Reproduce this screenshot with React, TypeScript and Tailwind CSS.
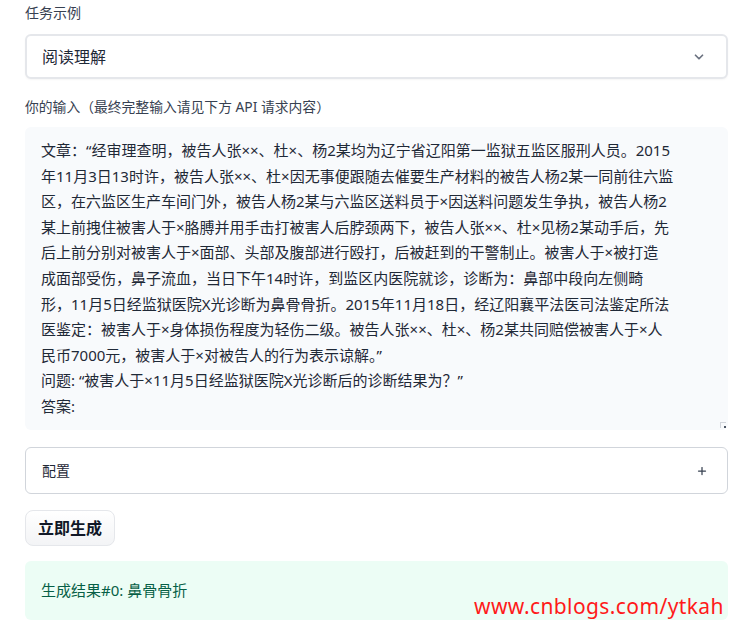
import { ChevronDown, Plus } from 'lucide-react'

const lines = [
  '文章：“经审理查明，被告人张××、杜×、杨2某均为辽宁省辽阳第一监狱五监区服刑人员。2015',
  '年11月3日13时许，被告人张××、杜×因无事便跟随去催要生产材料的被告人杨2某一同前往六监',
  '区，在六监区生产车间门外，被告人杨2某与六监区送料员于×因送料问题发生争执，被告人杨2',
  '某上前拽住被害人于×胳膊并用手击打被害人后脖颈两下，被告人张××、杜×见杨2某动手后，先',
  '后上前分别对被害人于×面部、头部及腹部进行殴打，后被赶到的干警制止。被害人于×被打造',
  '成面部受伤，鼻子流血，当日下午14时许，到监区内医院就诊，诊断为：鼻部中段向左侧畸',
  '形，11月5日经监狱医院X光诊断为鼻骨骨折。2015年11月18日，经辽阳襄平法医司法鉴定所法',
  '医鉴定：被害人于×身体损伤程度为轻伤二级。被告人张××、杜×、杨2某共同赔偿被害人于×人',
  '民币7000元，被害人于×对被告人的行为表示谅解。”',
  '问题: “被害人于×11月5日经监狱医院X光诊断后的诊断结果为？”',
  '答案:',
]

const font = { fontFamily: '"Noto Sans", "Noto Sans CJK SC", sans-serif' }

export default function App() {
  return (
    <main className="relative min-h-screen bg-white text-[#1f2937]" style={font}>
      <div className="pl-[25px] pr-[18px] pt-[3px] w-full">
        {/* 任务示例 */}
        <div className="text-[14px] leading-[20px] text-[#374151]">任务示例</div>
        <div className="mt-[11px] h-[45px] flex items-center justify-between pl-[15px] pr-[20px] rounded-md border-2 border-[#e5e7eb] bg-white shadow-[0_1px_2px_rgba(0,0,0,0.04)]">
          <span className="text-[16px] text-[#1f2937]">阅读理解</span>
          <ChevronDown className="w-[14px] h-[14px] text-[#6b7280]" strokeWidth={3} />
        </div>

        {/* 输入 */}
        <div className="mt-[18px] text-[13.8px] leading-[20px] text-[#374151]">你的输入（最终完整输入请见下方 API 请求内容）</div>
        <div className="relative mt-[10px] h-[303px] rounded-md bg-[#f8fafc] pl-[16px] pt-[11px]">
          {lines.map((l, i) => (
            <div key={i} className="text-[15px] leading-[25.6px] whitespace-nowrap text-[#1f2937]">{l}</div>
          ))}
          <div className="absolute right-[2px] bottom-[2px] w-[6px] h-[6px] border-t border-l border-[#d1d5db]">
            <div className="absolute right-0 bottom-0 w-[2px] h-[2px] bg-[#4b5563]" />
          </div>
        </div>

        {/* 配置 */}
        <div className="mt-[17px] h-[47px] flex items-center justify-between pl-[16px] pr-[19px] rounded-md border border-[#d1d5db] bg-white">
          <span className="text-[14px] text-[#1f2937]">配置</span>
          <Plus className="w-[12px] h-[12px] text-[#374151]" strokeWidth={2.5} />
        </div>

        <button className="mt-[16px] h-[36px] px-[12px] rounded-lg border border-[#e5e7eb] bg-gradient-to-b from-white to-[#f3f4f6] text-[16px] font-bold text-[#111827]">
          立即生成
        </button>

        {/* 结果 */}
        <div className="mt-[15px] h-[59px] flex items-center pl-[16px] rounded-md bg-[#ecfdf5]">
          <span className="text-[15px] text-[#065f46]">生成结果#0: 鼻骨骨折</span>
        </div>
      </div>

      <div className="absolute left-[474px] top-[593px] text-[21px] leading-[26px] tracking-[0.4px] text-[#ff1a1a]" style={{ fontFamily: '"Noto Sans", sans-serif' }}>
        www.cnblogs.com/ytkah
      </div>
    </main>
  )
}
